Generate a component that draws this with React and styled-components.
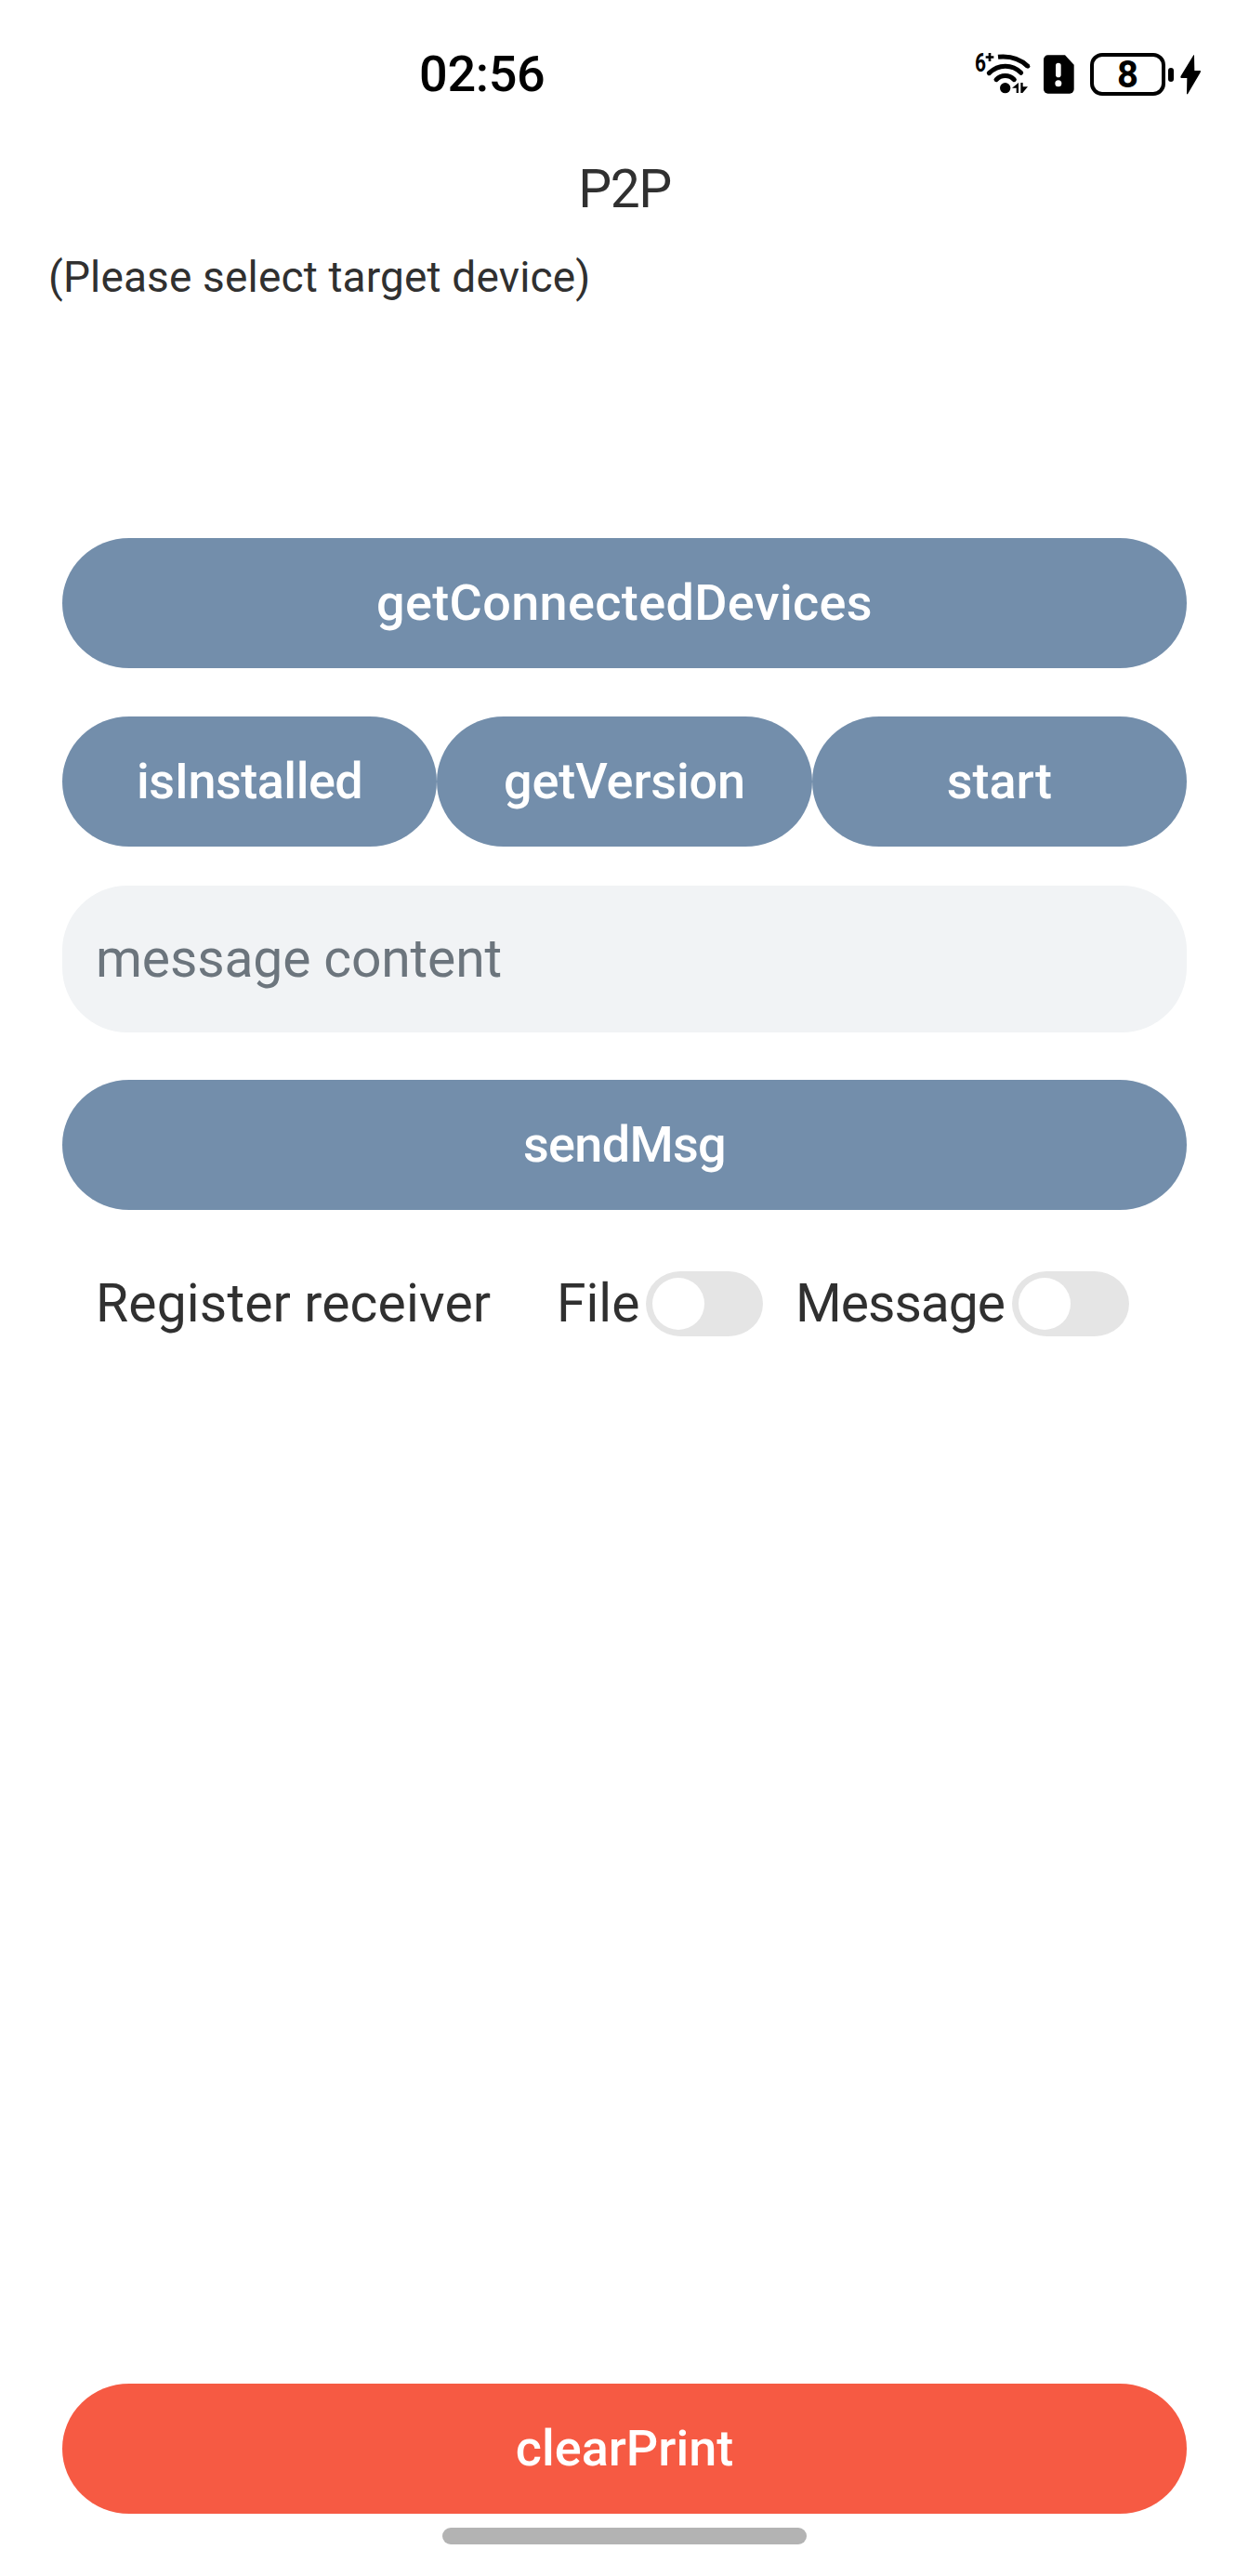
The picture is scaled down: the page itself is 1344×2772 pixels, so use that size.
import React, { useState } from "react";
import styled, { createGlobalStyle } from "styled-components";

const GlobalStyle = createGlobalStyle`
  * { box-sizing: border-box; }
  body { margin: 0; background: #fff; }
`;

const Screen = styled.main`
  display: flex;
  flex-direction: column;
  width: 1344px;
  height: 2772px;
  background: #fff;
  color: #303030;
  font-family: Roboto, "Noto Sans", sans-serif;
`;

const StatusBar = styled.header`
  display: flex;
  align-items: center;
  justify-content: space-between;
  height: 160px;
  padding: 0 51px 0 451px;
  color: #000;
`;

const Clock = styled.time`
  font-size: 54px;
  font-weight: 500;
  line-height: 64px;
  padding-bottom: 1px;
  letter-spacing: -0.3px;
`;

const StatusIcons = styled.div`
  display: flex;
  align-items: center;
  height: 50px;
`;

const Glyph = styled.svg`
  display: block;
  flex: none;
  margin-left: ${(p) => p.$gap || 0}px;
`;

const Battery = styled.div`
  display: flex;
  align-items: center;
  justify-content: center;
  width: 81px;
  height: 46px;
  margin-left: 17px;
  padding-top: 2px;
  border: 4px solid #000;
  border-radius: 13px;
  font-size: 40px;
  font-weight: 700;
  line-height: 36px;
`;

const BatteryCap = styled.span`
  width: 6px;
  height: 15px;
  margin-left: 3px;
  border-radius: 3px;
  background: #000;
`;

const Title = styled.h1`
  margin: 12px 0 0;
  height: 64px;
  font-size: 57px;
  font-weight: 400;
  line-height: 64px;
  text-align: center;
  letter-spacing: -1.5px;
`;

const Hint = styled.p`
  margin: 34px 0 0;
  height: 56px;
  padding-left: 52px;
  font-size: 46px;
  line-height: 56px;
  letter-spacing: 0.15px;
`;

const Controls = styled.section`
  display: flex;
  flex-direction: column;
  margin-top: 253px;
  padding: 0 67px;
`;

const ButtonRow = styled.div`
  display: flex;
  margin-top: 52px;
`;

const Button = styled.button`
  flex: ${(p) => (p.$share ? "1 1 0" : "none")};
  height: 140px;
  margin: ${(p) => p.$top || 0}px 0 0;
  padding: 0 0 1px;
  border: 0;
  border-radius: 72px / 70px;
  background: ${(p) => (p.$danger ? "#f65a43" : "#738eab")};
  color: #fff;
  font: 500 54px/64px Roboto, "Noto Sans", sans-serif;
  letter-spacing: ${(p) => p.$track || 0}px;
`;

const MessageInput = styled.input`
  height: 158px;
  margin-top: 42px;
  padding: 0 36px 2px;
  border: 0;
  border-radius: 70px;
  outline: 0;
  background: #f1f3f5;
  color: #303030;
  font: 400 57px/64px Roboto, "Noto Sans", sans-serif;
  letter-spacing: -0.15px;
  &::placeholder {
    color: #6c757d;
    opacity: 1;
  }
`;

const ReceiverRow = styled.div`
  display: flex;
  align-items: center;
  height: 70px;
  margin-top: 66px;
  padding-left: 36px;
`;

const Label = styled.span`
  flex: none;
  width: ${(p) => p.$width}px;
  padding-bottom: 1px;
  font-size: 57px;
  line-height: 64px;
  white-space: nowrap;
  letter-spacing: ${(p) => p.$track || 0}px;
`;

const Track = styled.button`
  display: flex;
  flex: none;
  align-items: center;
  justify-content: ${(p) => (p.$on ? "flex-end" : "flex-start")};
  width: 126px;
  height: 70px;
  margin: 0 ${(p) => p.$after || 0}px 0 0;
  padding: 0 7px;
  border: 0;
  border-radius: 37px / 35px;
  background: ${(p) => (p.$on ? "#738eab" : "#e5e5e5")};
`;

const Thumb = styled.span`
  width: 56px;
  height: 56px;
  border-radius: 50%;
  background: #fff;
`;

const Footer = styled.footer`
  display: flex;
  flex-direction: column;
  margin-top: auto;
  padding: 0 67px 34px;
`;

const HomeIndicator = styled.div`
  align-self: center;
  width: 392px;
  height: 18px;
  margin-top: 15px;
  border-radius: 9px;
  background: #b3b3b3;
`;

function WifiIcon() {
  return (
    <Glyph width="64" height="66" viewBox="48 23 192 198">
      <text x="57" y="112" fontFamily="Roboto, sans-serif" fontWeight="700" fontSize="82" textLength="36" lengthAdjust="spacingAndGlyphs">6</text>
      <path d="M105 53v27M92 66.500h26" stroke="#000" strokeWidth="8" fill="none" />
      <g fill="none" stroke="#000" strokeWidth="15">
        <path d="M132 66C170 62 203 72 228 96" strokeLinecap="butt" />
        <path d="M103 118C133 89 177 88 206 117" strokeLinecap="round" />
        <path d="M126 139C142 122 168 122 184 139" strokeLinecap="round" />
      </g>
      <circle cx="228" cy="96" r="7" />
      <circle cx="155" cy="166" r="17" />
      <path d="M198 149v33h-7v-16h-14zM205 149h7v13h16l-17 20h-6z" />
    </Glyph>
  );
}

function SimAlertIcon() {
  return (
    <Glyph $gap={13} width="33" height="42" viewBox="279 57 99 126">
      <path d="M293 58h55l29 31v79a14 14 0 0 1-14 14h-70a14 14 0 0 1-14-14V72a14 14 0 0 1 14-14z" />
      <rect x="318" y="83" width="17" height="47" rx="8.500" fill="#fff" />
      <circle cx="326.500" cy="149" r="10.500" fill="#fff" />
    </Glyph>
  );
}

function BoltIcon() {
  return (
    <Glyph $gap={7} width="23" height="43" viewBox="723 56 69 129">
      <path d="M766 57h2l1 50h20l-1 6-41 70h-3l1-52h-20l-1-5z" />
    </Glyph>
  );
}

function Switch({ label, after }) {
  const [on, setOn] = useState(false);
  return (
    <Track role="switch" aria-checked={on} aria-label={label} $on={on} $after={after} onClick={() => setOn(!on)}>
      <Thumb />
    </Track>
  );
}

export default function App() {
  return (
    <Screen>
      <GlobalStyle />
      <StatusBar>
        <Clock>02:56</Clock>
        <StatusIcons>
          <WifiIcon />
          <SimAlertIcon />
          <Battery>8</Battery>
          <BatteryCap />
          <BoltIcon />
        </StatusIcons>
      </StatusBar>
      <Title>P2P</Title>
      <Hint>(Please select target device)</Hint>
      <Controls>
        <Button $track={0.35}>getConnectedDevices</Button>
        <ButtonRow>
          <Button $share $track={-0.5}>isInstalled</Button>
          <Button $share $track={-0.15}>getVersion</Button>
          <Button $share>start</Button>
        </ButtonRow>
        <MessageInput placeholder="message content" />
        <Button $top={51} $track={-0.7}>sendMsg</Button>
        <ReceiverRow>
          <Label $width={496} $track={0.15}>Register receiver</Label>
          <Label $width={96}>File</Label>
          <Switch label="File" after={35} />
          <Label $width={233} $track={-1}>Message</Label>
          <Switch label="Message" />
        </ReceiverRow>
      </Controls>
      <Footer>
        <Button $danger>clearPrint</Button>
        <HomeIndicator />
      </Footer>
    </Screen>
  );
}
